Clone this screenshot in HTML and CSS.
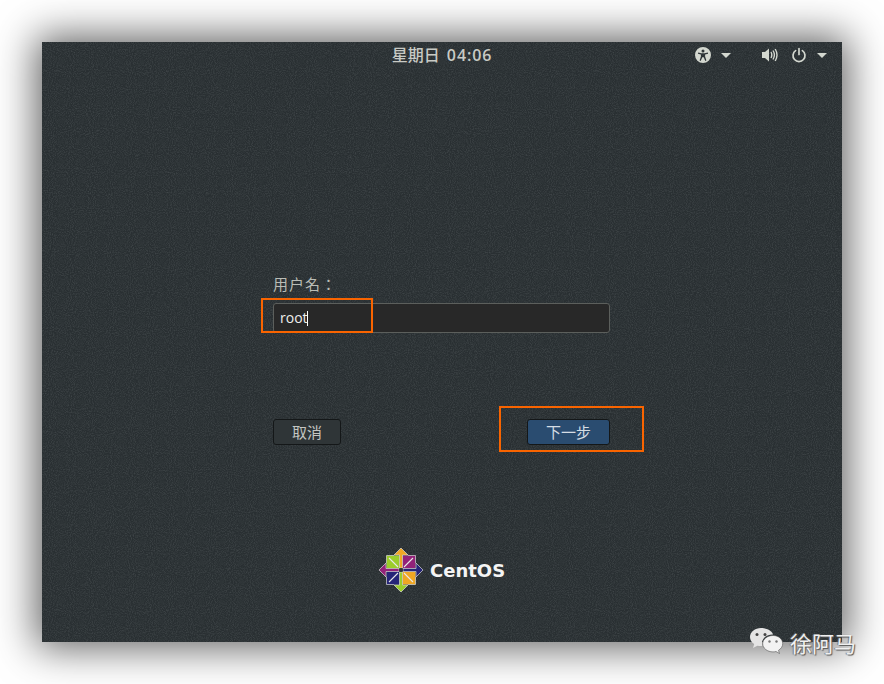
FILE: index.html
```html
<!DOCTYPE html>
<html lang="zh-CN">
<head>
    <meta charset="UTF-8">
    <title>CentOS 登录</title>
    <link rel="stylesheet" href="styles.css">
</head>
<body>
    <div class="screen">
        <svg class="grain" width="800" height="600" aria-hidden="true">
            <filter id="noise" color-interpolation-filters="sRGB">
                <feTurbulence type="fractalNoise" baseFrequency="0.95" numOctaves="2" seed="4"/>
                <feColorMatrix type="matrix" values="1.6 0 0 0 -0.6  1.6 0 0 0 -0.6  1.6 0 0 0 -0.6  0 0 0 0 1"/>
            </filter>
            <rect width="800" height="600" filter="url(#noise)" opacity="0.1"/>
        </svg>

        <header class="topbar">
            <div class="clock">星期日 <span class="clock-time">04:06</span></div>
            <div class="status status-a11y">
                <svg width="16" height="16" viewBox="0 0 16 16">
                    <path fill="#d3d7cf" fill-rule="evenodd" d="M8 0a8 8 0 1 0 0 16A8 8 0 0 0 8 0zm0 2.400a1.500 1.500 0 1 1 0 3 1.500 1.500 0 0 1 0-3zM3.200 5.600l3.200.7h3.200l3.200-.7.3 1.100-3 .9v2l1.300 4-1.100.4L8.700 10.300H7.300L5.700 14l-1.100-.4 1.300-4v-2l-3-.9z"/>
                </svg>
                <span class="caret"></span>
            </div>
            <div class="status status-system">
                <svg width="16" height="16" viewBox="0 0 16 16">
                    <path fill="#d3d7cf" d="M0 5h3l4-3.500v13L3 11H0z"/>
                    <path fill="none" stroke="#d3d7cf" stroke-width="1.400" d="M9 5q1.600 3 0 6M11 3.500q2.800 4.500 0 9M13.200 2q3.600 6 0 12"/>
                </svg>
                <svg class="power" width="16" height="16" viewBox="0 0 16 16">
                    <path fill="none" stroke="#d3d7cf" stroke-width="1.700" stroke-linecap="round" d="M8 1.500v6M4.600 3.600a6 6 0 1 0 6.800 0"/>
                </svg>
                <span class="caret"></span>
            </div>
        </header>

        <main class="login">
            <label class="login-label" lang="zh-TW">用户名：</label>
            <div class="entry">root<span class="cursor"></span></div>
            <div class="actions">
                <button class="btn">取消</button>
                <button class="btn btn-primary">下一步</button>
            </div>
        </main>

        <footer class="brand">
            <svg width="44" height="44" viewBox="-22 -22 44 44">
                <!-- corner tiles -->
                <path fill="#9ccd2a" d="M-14.500-14.500h13v13h-13z"/>
                <path fill="#932279" d="M14.500-14.500h-13v13h13z"/>
                <path fill="#efa724" d="M14.500 14.500h-13v-13h13z"/>
                <path fill="#262577" d="M-14.500 14.500h13v-13h-13z"/>
                <!-- outer arrows -->
                <g stroke="#d8d8d8" stroke-width=".7">
                    <path fill="#efa724" d="M0-22l-7 7h5.500V-2h3v-13H7z"/>
                    <path fill="#262577" d="M0-22l-7 7h5.500V-2h3v-13H7z" transform="rotate(90)"/>
                    <path fill="#9ccd2a" d="M0-22l-7 7h5.500V-2h3v-13H7z" transform="rotate(180)"/>
                    <path fill="#932279" d="M0-22l-7 7h5.500V-2h3v-13H7z" transform="rotate(270)"/>
                </g>
                <path stroke="#e8e8e8" stroke-width="1.100" d="M-12-12l9 9M12-12l-9 9M12 12l-9-9M-12 12l9-9"/>
                <path fill="none" stroke="#d8d8d8" stroke-width=".7" d="M-14.500-7V-14.500H-7M14.500-7V-14.500H7M14.500 7V14.500H7M-14.500 7V14.500H-7"/>
                <circle r="2" fill="#2e3436"/>
            </svg>
            <span class="brand-name">CentOS</span>
        </footer>
    </div>

    <!-- orange marks drawn over the shot -->
    <div class="mark mark-entry"></div>
    <div class="mark mark-next"></div>

    <div class="watermark">
        <svg width="36" height="32" viewBox="0 0 36 32">
            <path fill="#e4e4e4" d="M12 1C5.900 1 1 5 1 10c0 2.900 1.600 5.400 4.200 7.100L4 21l4.400-2.300c1.200.3 2.400.4 3.600.4.500 0 1 0 1.400-.1-.3-.9-.4-1.700-.4-2.600 0-5 4.500-8.900 10.400-8.900h.8C22.700 3.700 17.800 1 12 1z"/>
            <path fill="#f2f2f2" stroke="#555" stroke-width=".6" d="M24 8.500c-5.700 0-10.300 3.700-10.300 8.200s4.600 8.200 10.300 8.200c1 0 2-.1 3-.4l3.500 2-1-3.200c2.500-1.500 4.200-3.900 4.200-6.600 0-4.500-4-8.200-9.700-8.200z"/>
            <circle cx="8" cy="7.500" r="1.500" fill="#444"/>
            <circle cx="16" cy="7.500" r="1.500" fill="#444"/>
            <circle cx="20.500" cy="14.500" r="1.200" fill="#777"/>
            <circle cx="27.500" cy="14.500" r="1.200" fill="#777"/>
        </svg>
        <span class="watermark-name">徐阿马</span>
    </div>
</body>
</html>
```

FILE: styles.css
```css
* {
    margin: 0;
    padding: 0;
    box-sizing: border-box;
}

html, body {
    width: 884px;
    height: 684px;
    overflow: hidden;
}

body {
    position: relative;
    background: #fff;
    padding: 42px;
    font-family: "Open Sans", "Noto Sans CJK SC", sans-serif;
}

.screen {
    position: relative;
    display: flex;
    flex-direction: column;
    width: 800px;
    height: 600px;
    background: #2e3538;
    box-shadow: 0 0 38px 6px rgba(0,0,0,.62);
    color: #babdb6;
}

.grain {
    position: absolute;
    top: 0;
    left: 0;
}

/* top bar */
.topbar {
    position: relative;
    display: flex;
    align-items: center;
    height: 26px;
    flex: none;
}

.clock {
    position: absolute;
    left: 0;
    right: 0;
    text-align: center;
    font-size: 16px;
    font-weight: 500;
    color: #c8cac5;
    line-height: 24px;
}

.clock-time {
    margin-left: 3px;
    font-weight: 600;
    letter-spacing: .9px;
}

.status {
    position: absolute;
    top: 5px;
    display: flex;
    align-items: center;
    height: 16px;
}

.status-a11y {
    left: 653px;
}

.status-system {
    left: 720px;
}

.status .caret {
    width: 0;
    height: 0;
    margin-left: 10px;
    border-left: 5px solid transparent;
    border-right: 5px solid transparent;
    border-top: 5px solid #d3d7cf;
}

.power {
    margin-left: 13px;
}

/* login form */
.login {
    position: relative;
    width: 337px;
    margin: 207px 0 0 231px;
}

.login-label {
    display: block;
    height: 28px;
    font-family: "Noto Sans CJK TC", sans-serif;
    font-size: 15px;
    line-height: 18px;
    color: #babdb6;
    letter-spacing: 1px;
}

.entry {
    height: 30px;
    padding-left: 6px;
    background: #282828;
    border: 1px solid #5c5f5c;
    border-radius: 3px;
    font-size: 14px;
    line-height: 28px;
    color: #eeeeec;
}

.cursor {
    display: inline-block;
    width: 1px;
    height: 15px;
    margin-left: -1px;
    background: #fff;
    vertical-align: -3px;
}

.actions {
    display: flex;
    justify-content: space-between;
    margin-top: 86px;
}

.btn {
    width: 68px;
    height: 26px;
    padding-bottom: 2px;
    background: #2f3537;
    border: 1px solid #141718;
    border-radius: 3px;
    font-family: inherit;
    font-size: 15px;
    color: #c4c6c2;
}

.btn-primary {
    width: 83px;
    background: #2a4c70;
    color: #d6dde4;
}

/* logo */
.brand {
    position: relative;
    display: flex;
    align-items: center;
    margin: 103px 0 0 337px;
}

.brand-name {
    margin-left: 7px;
    font-family: "DejaVu Sans", sans-serif;
    font-size: 18px;
    font-weight: 700;
    color: #f4f4f4;
}

/* annotations */
.mark {
    position: absolute;
    border: 2px solid #f96400;
}

.mark-entry {
    top: 298px;
    left: 261px;
    width: 112px;
    height: 35px;
}

.mark-next {
    top: 406px;
    left: 499px;
    width: 145px;
    height: 46px;
}

.watermark {
    position: absolute;
    top: 627px;
    left: 749px;
    display: flex;
    align-items: center;
}

.watermark-name {
    margin-left: 5px;
    font-size: 22px;
    line-height: 32px;
    color: #f0f0f0;
    text-shadow: 1px 1px 1px #555, -1px 0 1px #777;
}
```
